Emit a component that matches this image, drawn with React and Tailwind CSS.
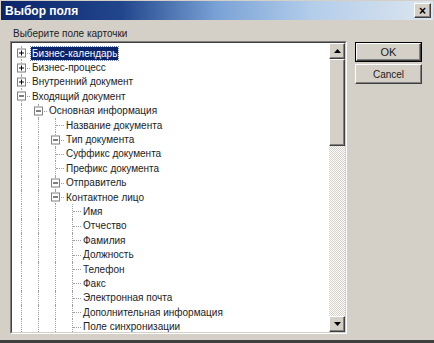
import React from 'react'

const rows = [
  { g: ['T'], box: '+', text: 'Бизнес-календарь', sel: true },
  { g: ['T'], box: '+', text: 'Бизнес-процесс' },
  { g: ['T'], box: '+', text: 'Внутренний документ' },
  { g: ['T'], box: '-', text: 'Входящий документ' },
  { g: ['I', 'T'], box: '-', text: 'Основная информация' },
  { g: ['I', 'I', 'T'], text: 'Название документа' },
  { g: ['I', 'I', 'T'], box: '-', text: 'Тип документа' },
  { g: ['I', 'I', 'T'], text: 'Суффикс документа' },
  { g: ['I', 'I', 'T'], text: 'Префикс документа' },
  { g: ['I', 'I', 'T'], box: '-', text: 'Отправитель' },
  { g: ['I', 'I', 'T'], box: '-', text: 'Контактное лицо' },
  { g: ['I', 'I', 'I', 'T'], text: 'Имя' },
  { g: ['I', 'I', 'I', 'T'], text: 'Отчество' },
  { g: ['I', 'I', 'I', 'T'], text: 'Фамилия' },
  { g: ['I', 'I', 'I', 'T'], text: 'Должность' },
  { g: ['I', 'I', 'I', 'T'], text: 'Телефон' },
  { g: ['I', 'I', 'I', 'T'], text: 'Факс' },
  { g: ['I', 'I', 'I', 'T'], text: 'Электронная почта' },
  { g: ['I', 'I', 'I', 'T'], text: 'Дополнительная информация' },
  { g: ['I', 'I', 'I', 'T'], text: 'Поле синхронизации' },
]

const raised =
  'border border-t-white border-l-white border-r-[#404040] border-b-[#404040] shadow-[inset_-1px_-1px_0_#808080]'

const Cell = ({ type, box }) => (
  <div className="relative w-[17px] h-full shrink-0">
    <div className="absolute left-[8px] top-0 bottom-0 border-l border-dotted border-[#a0a0a0]" />
    {type === 'T' && (
      <div className="absolute left-[9px] top-1/2 w-[8px] border-t border-dotted border-[#a0a0a0]" />
    )}
    {box && (
      <div className="absolute left-[4px] top-1/2 -translate-y-1/2 w-[9px] h-[9px] border border-[#808080] bg-white flex items-center justify-center">
        <div className="relative w-[5px] h-[5px] flex items-center justify-center">
          <div className="w-[5px] h-[1px] bg-black" />
          {box === '+' && <div className="absolute left-[2px] top-0 w-[1px] h-[5px] bg-black" />}
        </div>
      </div>
    )}
  </div>
)

const Arrow = ({ down }) => (
  <svg width="7" height="4" viewBox="0 0 7 4">
    <path d={down ? 'M0 0h7L3.5 4z' : 'M3.5 0L7 4H0z'} fill="#000" />
  </svg>
)

export default function App() {
  return (
    <div
      className="w-[434px] h-[343px] bg-[#d4d0c8] flex flex-col overflow-hidden border-b-[3px] border-[#404040] text-[#222]"
      style={{ fontFamily: '"Liberation Sans", Arial, sans-serif' }}
    >
      <div className="h-[19px] shrink-0 mx-[1px] mt-[1px] flex items-center justify-between pl-[4px] pr-[2px] bg-[linear-gradient(90deg,#0a246a_0%,#22468c_28%,#7aa2d6_50%,#b3cdea_72%,#dde6ef_100%)]">
        <span className="text-white text-[12px] font-bold leading-none">Выбор поля</span>
        <div className={`w-[17px] h-[15px] bg-[#d4d0c8] flex items-center justify-center ${raised}`}>
          <span className="text-[12px] font-bold leading-none text-black">×</span>
        </div>
      </div>

      <div className="flex pl-[10px] pt-[8px]">
        <div className="flex flex-col">
          <div className="h-[12px] ml-[3px] text-[10px] leading-[12px]">Выберите поле карточки</div>
          <div className="mt-[1px] w-[337px] h-[293px] flex border border-t-[#808080] border-l-[#808080] border-r-white border-b-white">
            <div className="flex flex-1 border border-t-[#404040] border-l-[#404040] border-r-[#d4d0c8] border-b-[#d4d0c8] bg-white">
              <div className="flex-1 flex flex-col pt-[3px] pl-[1px] overflow-hidden">
                {rows.map((r, i) => (
                  <div key={i} className="flex h-[14.4px] shrink-0 items-center">
                    {r.g.map((t, j) => (
                      <Cell key={j} type={t} box={j === r.g.length - 1 ? r.box : null} />
                    ))}
                    <span
                      className={`ml-[1px] px-[1px] text-[10px] leading-[13px] whitespace-nowrap ${
                        r.sel ? 'bg-[#0a246a] text-white outline-1 outline-dotted outline-[#6b7fb0]' : ''
                      }`}
                    >
                      {r.text}
                    </span>
                  </div>
                ))}
              </div>
              <div className="w-[16px] shrink-0 flex flex-col">
                <div className={`h-[16px] shrink-0 bg-[#d4d0c8] flex items-center justify-center ${raised}`}>
                  <Arrow />
                </div>
                <div className={`h-[87px] shrink-0 bg-[#d4d0c8] ${raised}`} />
                <div className="flex-1 bg-[repeating-conic-gradient(#d4d0c8_0%_25%,#ffffff_0%_50%)] bg-size-[2px_2px]" />
                <div className={`h-[16px] shrink-0 bg-[#d4d0c8] flex items-center justify-center ${raised}`}>
                  <Arrow down />
                </div>
              </div>
            </div>
          </div>
        </div>

        <div className="ml-[8px] pt-[14px] flex flex-col gap-[2px]">
          <div className="w-[67px] h-[20px] border border-black">
            <div className={`w-full h-full flex items-center justify-center text-[11px] ${raised}`}>OK</div>
          </div>
          <div className={`w-[67px] h-[20px] flex items-center justify-center text-[10px] ${raised}`}>Cancel</div>
        </div>
      </div>
    </div>
  )
}
